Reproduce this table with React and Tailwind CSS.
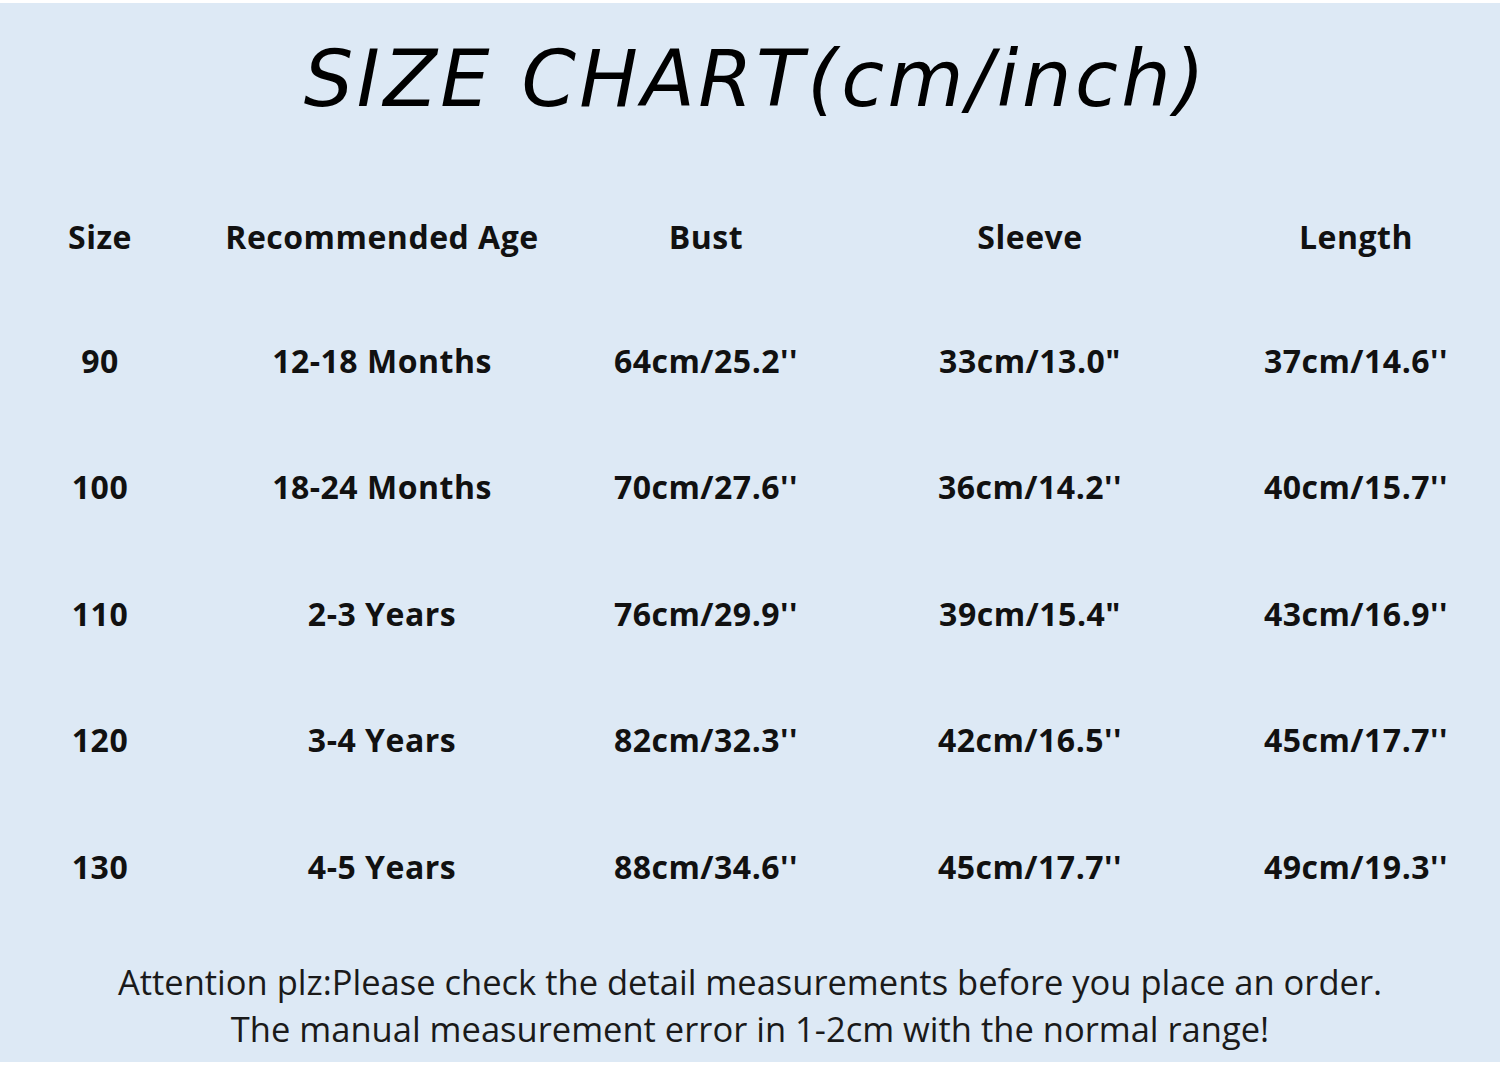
import React from 'react';

const rows = [
  ['90', '12-18 Months', "64cm/25.2''", '33cm/13.0"', "37cm/14.6''"],
  ['100', '18-24 Months', "70cm/27.6''", "36cm/14.2''", "40cm/15.7''"],
  ['110', '2-3 Years', "76cm/29.9''", '39cm/15.4"', "43cm/16.9''"],
  ['120', '3-4 Years', "82cm/32.3''", "42cm/16.5''", "45cm/17.7''"],
  ['130', '4-5 Years', "88cm/34.6''", "45cm/17.7''", "49cm/19.3''"],
];

const headers = ['Size', 'Recommended Age', 'Bust', 'Sleeve', 'Length'];

const Row = ({ cells, header }) => (
  <div
    className={`grid grid-cols-[200px_364px_284px_364px_288px] items-center ${
      header ? 'h-[126.5px] pt-[6px]' : 'h-[126.5px]'
    }`}
  >
    {cells.map((c, i) => (
      <div key={i} className="text-center font-bold text-[#111] text-[32px] tracking-[0.5px]">
        {c}
      </div>
    ))}
  </div>
);

export default function App() {
  return (
    <div className="w-[1500px] h-[1065px] bg-white flex flex-col">
      <div className="h-[3px] bg-white" />
      <div className="h-[1059px] bg-[#dde9f5] flex flex-col font-['Open_Sans',sans-serif]">
        <div className="h-[168px] flex justify-center pt-[37px] pl-[12px]">
          <h1 className="text-[78px] leading-none italic text-black tracking-[3.5px] font-['DejaVu_Sans',sans-serif]">
            SIZE CHART(cm/inch)
          </h1>
        </div>
        <Row cells={headers} header />
        {rows.map((r) => (
          <Row key={r[0]} cells={r} />
        ))}
        <div className="pt-[28px] text-center text-[34.5px] leading-[47px] text-[#1a1a1a]">
          <p>Attention plz:Please check the detail measurements before you place an order.</p>
          <p>The manual measurement error in 1-2cm with the normal range!</p>
        </div>
      </div>
    </div>
  );
}
